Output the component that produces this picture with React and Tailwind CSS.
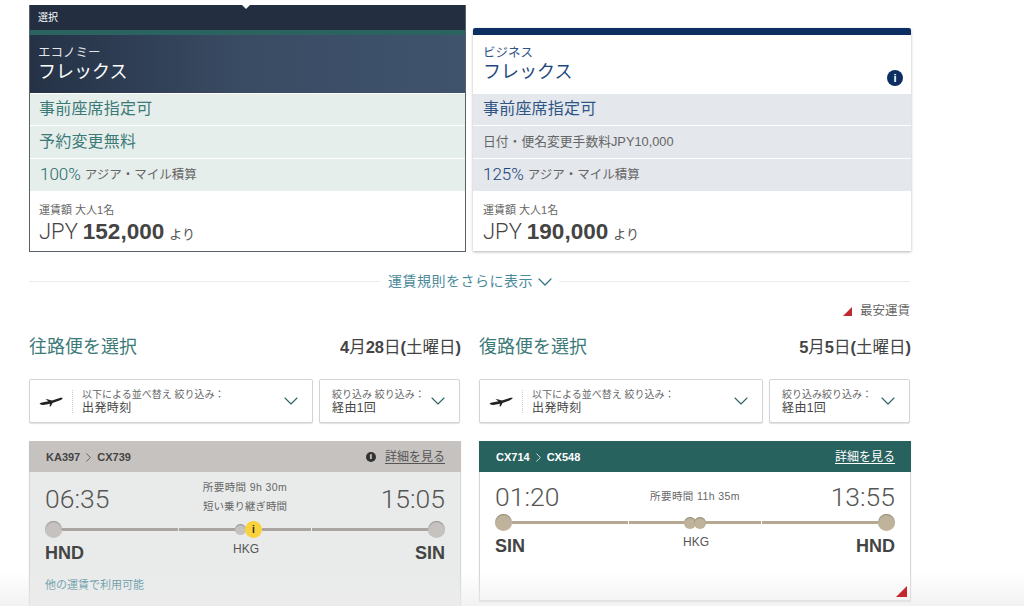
import { ChevronDown } from 'lucide-react';

const jp = { fontFamily: '"Liberation Sans", "Noto Sans CJK JP", sans-serif' };

const PlaneIcon = () => (
  <svg width="24" height="12" viewBox="0 0 24 12" className="text-[#222]" fill="currentColor">
    <path d="M0.5 8.2 L3 7.6 L9.5 6.3 L6.5 4.2 L8.3 4.3 L13 5.4 L20 3.2 C21.5 2.8 23.4 2.6 23.6 3.2 C23.8 3.9 22 4.8 20.5 5.4 L13.5 8 L11.8 11.2 L10.6 11.5 L10.9 8.8 L4.5 10 L2 9.8 Z" />
  </svg>
);

const InfoDot = ({ className }) => (
  <span className={`flex items-center justify-center rounded-full font-bold font-['Liberation_Sans'] ${className}`}>i</span>
);

const Row = ({ children, color, height = 'h-[32px]' }) => (
  <div className={`${height} flex items-center px-[10px] border-b border-white ${color}`}>{children}</div>
);

const Miles = ({ pct, color }) => (
  <>
    <span className={`text-[17px] font-light font-['Roboto'] ${color}`}>{pct}</span>
    <span className="text-[12.5px] text-[#666] ml-[4px]">アジア・マイル積算</span>
  </>
);

const Price = ({ amount, pad }) => (
  <div className={`h-[59px] bg-white ${pad} pt-[11px] text-[#444]`}>
    <div className="text-[11px] leading-[14px] text-[#666]">運賃額 大人1名</div>
    <div className="leading-[26px] mt-[2px] flex items-baseline">
      <span className="text-[22px] font-light font-['Roboto']">JPY</span>
      <span className="text-[22.5px] font-bold ml-[5px]">{amount}</span>
      <span className="text-[13px] ml-[5px] text-[#555]">より</span>
    </div>
  </div>
);

const Dropdown = ({ width, label, value, plane }) => (
  <div className={`${width} h-[44px] bg-white border border-[#d4d4d4] rounded-[2px] shadow-[0_1px_1px_rgba(0,0,0,0.12)] flex items-center`}>
    {plane && (
      <div className="w-[43px] h-[23px] flex items-center justify-center border-r border-dotted border-[#ccc] shrink-0">
        <PlaneIcon />
      </div>
    )}
    <div className={`flex-1 whitespace-nowrap ${plane ? 'pl-[9px]' : 'pl-[12px]'} pt-[1px]`}>
      <div className="text-[10px] leading-[12px] text-[#666]">{label}</div>
      <div className="text-[12px] leading-[14px] text-[#444] tracking-[0.4px]">{value}</div>
    </div>
    <ChevronDown className="text-[#2a6360] mr-[9px] shrink-0" size={24} strokeWidth={1.1} />
  </div>
);

const Stop = ({ size, color }) => (
  <span className={`${size} ${color} rounded-full shrink-0 shadow-[inset_0_1px_1px_rgba(0,0,0,0.25)]`} />
);

const Segment = ({ color, width }) => <span className={`${width} h-[3px] ${color}`} />;

const FlightCard = ({ flights, from, to, dep, arr, duration, warn, line, dot, head, body, linkColor, flightColor, info, notice, extra, height }) => (
  <div className={`${body} ${height} border border-[#d6d6d6] border-t-0 shadow-[0_1px_1px_rgba(0,0,0,0.15)]`}>
    <div className={`${head} h-[31px] -mx-px flex items-center justify-between pl-[17px] pr-[16px]`}>
      <div className={`${flightColor} text-[11px] font-bold flex items-center pt-px`}>
        {flights[0]}
        <ChevronDown className="-rotate-90 mx-[1px]" size={15} strokeWidth={1.2} />
        {flights[1]}
      </div>
      <div className="flex items-center">
        {info && <InfoDot className="w-[10px] h-[10px] bg-[#333] text-white text-[8px] mr-[9px]" />}
        <span className={`${linkColor} text-[12px] underline underline-offset-2`}>詳細を見る</span>
      </div>
    </div>
    <div className={`px-[15px] ${warn ? 'pt-[6px]' : 'pt-[9px]'}`}>
      <div className={`grid grid-cols-[1fr_auto_1fr] ${warn ? 'items-start h-[43px]' : 'items-center h-[31px] mb-[2px]'}`}>
        <span className={`text-[26.5px] leading-[30px] font-light text-[#555] font-['Roboto'] ${warn ? 'mt-[6px]' : ''}`}>{dep}</span>
        <div className="text-center text-[10.5px] leading-[19px] text-[#666]">
          <div className="tracking-[0.4px]">{duration}</div>
          {warn && <div>短い乗り継ぎ時間</div>}
        </div>
        <span className={`text-[26.5px] leading-[30px] font-light text-[#555] font-['Roboto'] text-right ${warn ? 'mt-[6px]' : ''}`}>{arr}</span>
      </div>
      <div className="flex items-center h-[17px]">
        <Stop size="w-[17px] h-[17px]" color={dot} />
        <Segment color={line} width="w-[116px]" />
        <span className="w-[1px]" />
        <Segment color={line} width="flex-1" />
        {warn ? (
          <>
            <Stop size="w-[11px] h-[11px]" color={dot} />
            <span className="w-[17px] h-[17px] rounded-full bg-[#f9d23c] text-[#222] font-bold text-[10px] flex items-center justify-center -ml-[1px] shrink-0">i</span>
          </>
        ) : (
          <>
            <Stop size="w-[12px] h-[12px]" color={dot} />
            <span className="-ml-[2px]"><Stop size="block w-[12px] h-[12px]" color={dot} /></span>
          </>
        )}
        <Segment color={line} width={warn ? 'w-[49px]' : 'flex-1'} />
        <span className="w-[1px]" />
        <Segment color={line} width="w-[116px]" />
        <Stop size="w-[17px] h-[17px]" color={dot} />
      </div>
      <div className="grid grid-cols-3 items-start text-[#444] mt-[3px] font-['Liberation_Sans']">
        <span className="text-[18px] font-bold leading-[24px]">{from}</span>
        <span className="text-[12px] leading-[16px] text-[#555] text-center pl-[2px]">HKG</span>
        <span className="text-[18px] font-bold leading-[24px] text-right">{to}</span>
      </div>
      {notice && <div className="text-[11px] text-[#4b8a9a] mt-[12px] leading-[16px]">{notice}</div>}
    </div>
    {extra}
  </div>
);

const Section = ({ title, date, dayNum, children, filterLabel }) => (
  <div className="w-[432px]">
    <div className="flex items-center justify-between h-[34px]">
      <span className="text-[18px] text-[#3c7a78]">{title}</span>
      <span className="text-[16.5px] font-bold text-[#444]">
        {date}
        <span className="font-normal">月</span>
        {dayNum}
        <span className="font-normal">日</span>
        (<span className="font-normal">土曜日</span>)
      </span>
    </div>
    <div className="flex justify-between w-[431px] mt-[15px] mb-[18px]">
      <Dropdown width="w-[284px]" label="以下による並べ替え 絞り込み：" value="出発時刻" plane />
      <Dropdown width="w-[141px]" label={filterLabel} value="経由1回" />
    </div>
    {children}
  </div>
);

const App = () => {
  return (
    <div className="relative w-[1024px] h-[606px] overflow-hidden bg-white pl-[29px] pt-[5px]" style={jp}>
      {/* fare cards */}
      <div className="flex items-start">
        <div className="w-[437px] border border-[#5a6068] border-t-0 relative">
          <div className="h-[25px] bg-[#232f41] text-white text-[10px] flex items-center pl-[8px]">選択</div>
          <div className="absolute left-[211px] -top-px w-0 h-0 border-x-[5px] border-x-transparent border-t-[5px] border-t-white" />
          <div className="h-[5px] bg-[#2a6360]" />
          <div className="h-[59px] bg-gradient-to-r from-[#253246] via-[#3a4c64] to-[#40536d] text-white pl-[8px] pt-[11px] border-b border-white">
            <div className="text-[12.5px] leading-[14px] text-[#e3e6ea]">エコノミー</div>
            <div className="text-[18px] leading-[24px]">フレックス</div>
          </div>
          <Row color="bg-[#e6eeec]"><span className="text-[16px] tracking-[0.2px] text-[#3c7a78] -ml-px -mt-[2px]">事前座席指定可</span></Row>
          <Row color="bg-[#e6eeec]" height="h-[33px]"><span className="text-[16px] tracking-[0.2px] text-[#3c7a78] -ml-px">予約変更無料</span></Row>
          <Row color="bg-[#e6eeec]" height="h-[33px]"><Miles pct="100%" color="text-[#1f6a68]" /></Row>
          <Price amount="152,000" pad="px-[9px]" />
        </div>

        <div className="w-[438px] ml-[7px] mt-[23px] shadow-[0_1px_3px_rgba(0,0,0,0.3)] rounded-t-[2px]">
          <div className="h-[7px] bg-[#0c2e63] rounded-t-[2px]" />
          <div className="h-[59px] bg-white pl-[10px] pt-[11px] border-b border-white relative">
            <div className="text-[12.5px] leading-[14px] text-[#2f5585]">ビジネス</div>
            <div className="text-[18px] leading-[24px] text-[#1f4a7d]">フレックス</div>
            <InfoDot className="absolute right-[8px] top-[35px] w-[16px] h-[16px] bg-[#0c2e63] text-white text-[11px]" />
          </div>
          <Row color="bg-[#e4e7ec]"><span className="text-[16px] tracking-[0.2px] text-[#2f5585] -mt-[2px]">事前座席指定可</span></Row>
          <Row color="bg-[#e4e7ec]" height="h-[33px]"><span className="text-[12.8px] text-[#666]">日付・便名変更手数料JPY10,000</span></Row>
          <Row color="bg-[#e4e7ec]" height="h-[33px]"><Miles pct="125%" color="text-[#17427a]" /></Row>
          <Price amount="190,000" pad="px-[10px]" />
        </div>
      </div>

      {/* more rules */}
      <div className="w-[881px] flex items-center mt-[19px] h-[20px]">
        <span className="w-[351px] h-px bg-[#ececec]" />
        <span className="text-[14px] tracking-[0.5px] text-[#4b8a9a] ml-[8px] mr-[2px] flex items-center">
          運賃規則をさらに表示
          <ChevronDown className="text-[#2a6f86] mt-[2px]" size={24} strokeWidth={1.2} />
        </span>
        <span className="flex-1 h-px bg-[#ececec]" />
      </div>

      <div className="w-[881px] flex justify-end items-center h-[16px] mt-[12px] text-[12.5px] text-[#666]">
        <span className="w-0 h-0 border-l-[9px] border-l-transparent border-b-[9px] border-b-[#c2282e] mr-[8px]" />
        最安運賃
      </div>

      {/* flight columns */}
      <div className="flex gap-[18px] mt-[11px]">
        <Section title="往路便を選択" date="4" dayNum="28" filterLabel="絞り込み 絞り込み：">
          <FlightCard
            flights={['KA397', 'CX739']} from="HND" to="SIN" dep="06:35" arr="15:05"
            duration="所要時間 9h 30m" warn info
            notice="他の運賃で利用可能"
            head="bg-[#c6c2c0]" body="bg-[#e9ebea]" line="bg-[#aaa5a3]" dot="bg-[#c6c2c0]"
            flightColor="text-[#444]" linkColor="text-[#555]" height="h-[200px]"
          />
        </Section>
        <Section title="復路便を選択" date="5" dayNum="5" filterLabel="絞り込み絞り込み：">
          <FlightCard
            flights={['CX714', 'CX548']} from="SIN" to="HND" dep="01:20" arr="13:55"
            duration="所要時間 11h 35m"
            head="bg-[#28625f]" body="bg-white relative" line="bg-[#b5aa91]" dot="bg-[#bfb49b]"
            flightColor="text-white" linkColor="text-white" height="h-[160px]"
            extra={<span className="absolute z-10 right-[3px] bottom-[3px] w-0 h-0 border-l-[11px] border-l-transparent border-b-[11px] border-b-[#c2282e]" />}
          />
        </Section>
      </div>

      {/* fade at the bottom of the window */}
      <div className="absolute inset-x-0 bottom-0 h-[34px] bg-gradient-to-b from-transparent to-[#ececec]/70 pointer-events-none" />
    </div>
  );
};

export default App;
